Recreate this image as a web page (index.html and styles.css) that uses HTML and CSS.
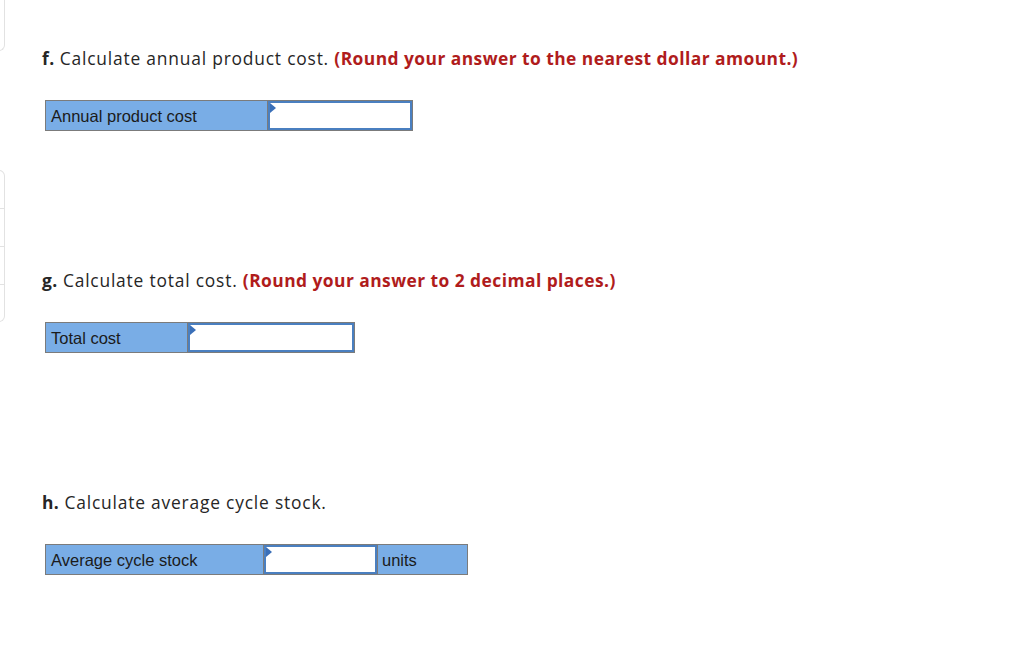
FILE: index.html
```html
<!DOCTYPE html>
<html>
<head>
<meta charset="utf-8">
<link rel="stylesheet" href="styles.css">
</head>
<body>
<div class="page">
  <div class="rail">
    <div class="frag frag-top"></div>
    <div class="frag frag-list">
      <div class="frag-row"></div>
      <div class="frag-row"></div>
      <div class="frag-row"></div>
      <div class="frag-row last"></div>
    </div>
  </div>
  <div class="main">
    <section class="q">
      <p class="prompt"><b>f.</b> Calculate annual product cost. <span class="hint">(Round your answer to the nearest dollar amount.)</span></p>
      <div class="grid g-f">
        <div class="cell label">Annual product cost</div>
        <div class="cell input"><span class="flag"></span></div>
      </div>
    </section>
    <section class="q">
      <p class="prompt"><b>g.</b> Calculate total cost. <span class="hint">(Round your answer to 2 decimal places.)</span></p>
      <div class="grid g-g">
        <div class="cell label">Total cost</div>
        <div class="cell input"><span class="flag"></span></div>
      </div>
    </section>
    <section class="q">
      <p class="prompt"><b>h.</b> Calculate average cycle stock.</p>
      <div class="grid g-h">
        <div class="cell label">Average cycle stock</div>
        <div class="cell input"><span class="flag"></span></div>
        <div class="cell label">units</div>
      </div>
    </section>
  </div>
</div>
</body>
</html>
```

FILE: styles.css
```css
html, body {
  margin: 0;
  padding: 0;
  background: #ffffff;
}
.page {
  display: flex;
  width: 1024px;
  height: 661px;
  overflow: hidden;
}
.rail {
  width: 6px;
  flex: none;
  display: flex;
  flex-direction: column;
}
.frag {
  margin-left: -20px;
  width: 24px;
  border: 1px solid #e2e2e2;
  border-left: none;
  background: #fff;
}
.frag-top {
  height: 56px;
  margin-top: -6px;
  border-top: none;
  border-radius: 0 0 6px 0;
}
.frag-list {
  margin-top: 119px;
  border-radius: 0 6px 6px 0;
  display: flex;
  flex-direction: column;
}
.frag-row {
  height: 37px;
  border-bottom: 1px solid #e2e2e2;
}
.frag-row.last {
  border-bottom: none;
  height: 36px;
}
.main {
  padding-left: 36px;
  padding-top: 46px;
}
.q {
  height: 222px;
}
.prompt {
  margin: 0;
  font-family: "Open Sans", Lato, sans-serif;
  font-size: 17.4px;
  line-height: 24px;
  color: #262626;
  letter-spacing: 0.8px;
}
.prompt b {
  font-weight: 700;
  letter-spacing: 0.4px;
}
.hint {
  color: #b01c1c;
  font-weight: 700;
  letter-spacing: 0.45px;
}
.grid {
  display: grid;
  margin-top: 30px;
  margin-left: 3px;
  border: 1px solid #7b7b7b;
  width: max-content;
  height: 29px;
}
.g-f { grid-template-columns: 222px 144px; }
.g-g { grid-template-columns: 142px 166px; }
.g-h { grid-template-columns: 218px 113px 90px; }
.cell {
  font-family: "Liberation Sans", Arial, sans-serif;
  font-size: 16.5px;
  color: #1b1b1b;
  display: flex;
  align-items: center;
  box-sizing: border-box;
}
.label {
  background: #79ade6;
  padding-left: 5px;
  padding-top: 1px;
  border-right: 1px solid #7b7b7b;
}
.label:last-child {
  border-right: none;
  padding-left: 4px;
}
.input {
  background: #ffffff;
  border: 2px solid #4a7fc0;
  position: relative;
}
.g-h .input + .label {
  border-left: 1px solid #7b7b7b;
}
.flag {
  position: absolute;
  left: 0;
  top: 0;
  width: 0;
  height: 0;
  border-top: 5px solid transparent;
  border-bottom: 5px solid transparent;
  border-left: 6px solid #3a6fb8;
}
```
